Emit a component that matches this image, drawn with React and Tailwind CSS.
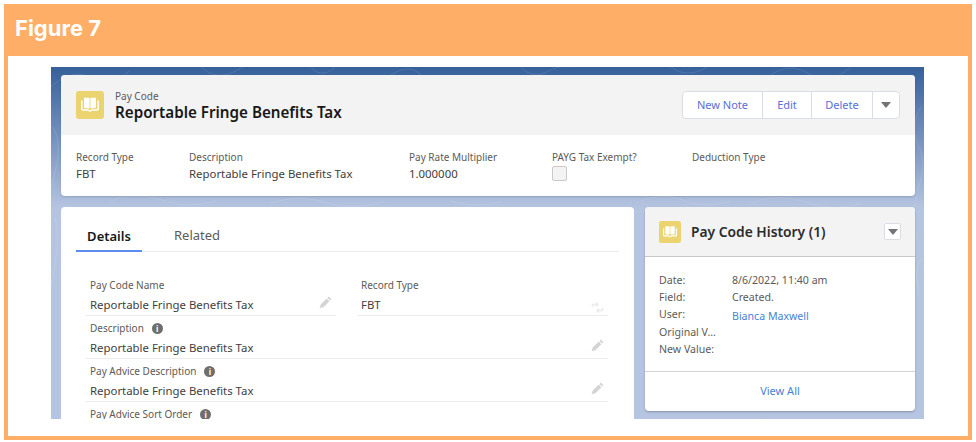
import React from 'react';

function BookIcon({ size }) {
  return (
    <svg width={size} height={size} viewBox="0 0 28 28" fill="none" className="shrink-0">
      <rect width="28" height="28" rx="3" fill="#ebd36f" />
      <path d="M8 6.800h4.600c.7 0 1 .5 1 1.200v9.200H9.200C8.500 17.200 8 16.700 8 16V6.800zM20 6.800h-4.600c-.7 0-1 .5-1 1.200v9.200h4.400c.7 0 1.200-.5 1.200-1.200V6.800z" fill="#fff" />
      <path d="M5.800 9.500v8.300c0 .7.500 1.200 1.100 1.200h5.300c.5 0 .6.900 1.100.900h1.400c.5 0 .6-.9 1.100-.9h5.300c.6 0 1.100-.5 1.100-1.200V9.500" stroke="#fff" strokeWidth="1.500" />
    </svg>
  );
}

function Caret() {
  return (
    <svg width="10" height="6" viewBox="0 0 10 6">
      <path d="M0 0h10L5 6z" fill="#747474" />
    </svg>
  );
}

function Pencil() {
  return (
    <svg width="13" height="13" viewBox="0 0 13 13" className="shrink-0 mb-[5px]">
      <path d="M9.800.6l2.600 2.600-1.300 1.300-2.600-2.600zM7.800 2.600l2.600 2.600-6 6-3.800 1.100 1.100-3.800z" fill="#d4d4d4" />
    </svg>
  );
}

function SwapIcon() {
  return (
    <svg width="13" height="13" viewBox="0 0 13 13" className="shrink-0 mt-[4px]" fill="none" stroke="#ececec" strokeWidth="1.600">
      <path d="M1.500 6V3.500h5M5 1.500l2 2-2 2M11.500 7v2.500h-5M8 7.500l-2 2 2 2" />
    </svg>
  );
}

function Info() {
  return (
    <span className="w-[11px] h-[11px] rounded-full bg-[#706e6b] text-white text-[8px] leading-[11px] font-bold text-center shrink-0">i</span>
  );
}

function Highlight({ label, value, className }) {
  return (
    <div className={className}>
      <div className="text-[10px] leading-[14px] text-[#5c5a57]">{label}</div>
      <div className="text-[11.4px] leading-[16px] mt-[2px] text-[#3e3e3c]">{value}</div>
    </div>
  );
}

function Field({ label, value, info, icon, className }) {
  return (
    <div className={`border-b border-[#ececec] pr-[4px] ${className}`}>
      <div className="flex items-center gap-2 text-[10px] leading-[14px] text-[#5c5a57]">
        {label}
        {info && <Info />}
      </div>
      <div className="flex items-center justify-between h-[16px] mt-[5px] text-[11.4px] text-[#3e3e3c]">
        <span>{value}</span>
        {icon}
      </div>
    </div>
  );
}

function HistoryRow({ label, value, link, className }) {
  return (
    <div className={`flex text-[10.6px] leading-[14px] ${className}`}>
      <div className="w-[73px] text-[#5c5a57]">{label}</div>
      {link ? <a className="text-[#4a7fd6] mt-[2px]">{value}</a> : <div className="text-[#5c5a57]">{value}</div>}
    </div>
  );
}

// faint contour lines in the page backdrop
function Contours() {
  return (
    <svg width="873" height="352" viewBox="0 0 873 352" fill="none" stroke="#ffffff" strokeOpacity="0.1" strokeWidth="1" className="absolute inset-0">
      <path d="M0 20c14-14 30-16 44-8s22 4 34-8M2 60c10 18 4 40-2 60M4 150c6 24 0 44-4 70" />
      <path d="M150 0c8 6 10 8 20 8s14-4 22-8M260 0c6 8 16 8 24 0M340 8c12-8 22-8 30 0M470 0c6 8 18 10 28 4s18-4 26-4" />
      <path d="M620 0c10 8 24 8 36 0M720 8c14-10 28-8 40 0s26 4 40-8" />
      <path d="M870 40c-8 12-8 28-2 40s4 30-2 44M866 130c-6 14-4 30 0 44M872 190c-8 10-8 22-4 34" />
      <path d="M590 134c14-6 30-6 44 0s30 4 46 0M700 136c20-8 40-6 58 0s34 6 54 0" />
      <path d="M60 134c18-8 36-6 54 0s34 4 52 0M220 136c20-6 38-6 56 0s40 4 58-2M400 134c14 4 34 6 50 0" />
    </svg>
  );
}

export default function App() {
  return (
    <div className="w-[976px] h-[442px] bg-white p-1 overflow-hidden font-['Noto_Sans',sans-serif]">
      <div className="h-[436px] flex flex-col border-x-4 border-b-4 border-[#ffae68] w-[968px]">
        <div className="h-[52px] -mx-1 bg-[#ffae68] flex items-center pl-[11px] pb-1 text-white text-[22px] font-bold font-['Inter',sans-serif]">
          Figure 7
        </div>
        <div className="pt-[11px] pl-[43px]">
          <div className="relative w-[873px] h-[352px] overflow-hidden bg-linear-to-b from-[#36609b] to-[#b5c4e0] to-[40%]">
            <Contours />
            <div className="relative pl-[10px] pr-[9px] pt-2">
              {/* Record header */}
              <div className="bg-white rounded shadow-[0_1px_2px_rgba(0,0,0,0.15)] overflow-hidden h-[121px]">
                <div className="h-[60px] bg-[#f3f3f3] flex items-center justify-between px-[15px]">
                  <div className="flex items-center gap-[11px]">
                    <BookIcon size={28} />
                    <div>
                      <div className="text-[10px] leading-[13px] text-[#5c5a57]">Pay Code</div>
                      <div className="text-[15.2px] leading-[18px] font-semibold text-[#181818]">Reportable Fringe Benefits Tax</div>
                    </div>
                  </div>
                  <div className="flex h-[28px] bg-white border border-[#d8dde6] rounded text-[11px] text-[#5a6fd6] items-stretch">
                    <button className="w-[80px] border-r border-[#d8dde6]">New Note</button>
                    <button className="w-[49px] border-r border-[#d8dde6]">Edit</button>
                    <button className="w-[61px] border-r border-[#d8dde6]">Delete</button>
                    <button className="w-[26px] flex items-center justify-center"><Caret /></button>
                  </div>
                </div>
                <div className="flex pl-[15px] pt-[15px]">
                  <Highlight label="Record Type" value="FBT" className="w-[113px]" />
                  <Highlight label="Description" value="Reportable Fringe Benefits Tax" className="w-[220px]" />
                  <Highlight label="Pay Rate Multiplier" value="1.000000" className="w-[143px]" />
                  <div className="w-[140px]">
                    <div className="text-[10px] leading-[14px] text-[#5c5a57]">PAYG Tax Exempt?</div>
                    <div className="mt-[2px] w-[15px] h-[15px] rounded-[2px] border border-[#c9c9c9] bg-[#f3f3f3]" />
                  </div>
                  <Highlight label="Deduction Type" value="" />
                </div>
              </div>

              <div className="flex gap-[11px] mt-[11px] items-start">
                {/* Details card */}
                <div className="w-[573px] h-[240px] bg-white rounded-t px-[15px]">
                  <div className="flex border-b border-[#ececec] h-[45px] items-end">
                    <div className="w-[66px] h-[25px] text-center text-[13px] leading-[18px] font-semibold text-[#181818] border-b-2 border-[#5b8def] -mb-px">Details</div>
                    <div className="ml-[32px] h-[25px] text-[13px] leading-[18px] text-[#5c5a57]">Related</div>
                  </div>
                  <div className="pt-[26px] pl-[10px] w-[532px]">
                    <div className="flex gap-[22px]">
                      <Field label="Pay Code Name" value="Reportable Fringe Benefits Tax" icon={<Pencil />} className="w-[250px] h-[38px] pl-1" />
                      <Field label="Record Type" value="FBT" icon={<SwapIcon />} className="w-[250px] h-[38px] pl-[3px]" />
                    </div>
                    <Field label="Description" value="Reportable Fringe Benefits Tax" info icon={<Pencil />} className="mt-[5px] h-[38px] pl-1" />
                    <Field label="Pay Advice Description" value="Reportable Fringe Benefits Tax" info icon={<Pencil />} className="mt-[5px] h-[38px] pl-1" />
                    <Field label="Pay Advice Sort Order" value="" info className="mt-[5px] h-[38px] pl-1" />
                  </div>
                </div>

                {/* History card */}
                <div className="w-[270px] h-[204px] bg-white rounded shadow-[0_1px_2px_rgba(0,0,0,0.25)] flex flex-col overflow-hidden">
                  <div className="h-[50px] bg-[#f3f3f3] border-b border-[#c9c9c9] flex items-center justify-between px-[14px]">
                    <div className="flex items-center gap-[10px]">
                      <BookIcon size={22} />
                      <span className="text-[13.8px] font-semibold text-[#2b2b2b] mt-[2px]">Pay Code History (1)</span>
                    </div>
                    <button className="w-[17px] h-[17px] bg-white border border-[#d8dde6] rounded-[2px] flex items-center justify-center"><Caret /></button>
                  </div>
                  <div className="h-[115px] border-b border-[#d4d4d4] pl-[14px] pt-[16px]">
                    <HistoryRow label="Date:" value="8/6/2022, 11:40 am" />
                    <HistoryRow label="Field:" value="Created." className="mt-[3px]" />
                    <HistoryRow label="User:" value="Bianca Maxwell" link className="mt-[3px]" />
                    <HistoryRow label="Original V..." value="" className="mt-[2px]" />
                    <HistoryRow label="New Value:" value="" className="mt-[3px]" />
                  </div>
                  <div className="flex-1 flex items-center justify-center text-[11px] text-[#4a7fd6]">View All</div>
                </div>
              </div>
            </div>
          </div>
        </div>
      </div>
    </div>
  );
}
